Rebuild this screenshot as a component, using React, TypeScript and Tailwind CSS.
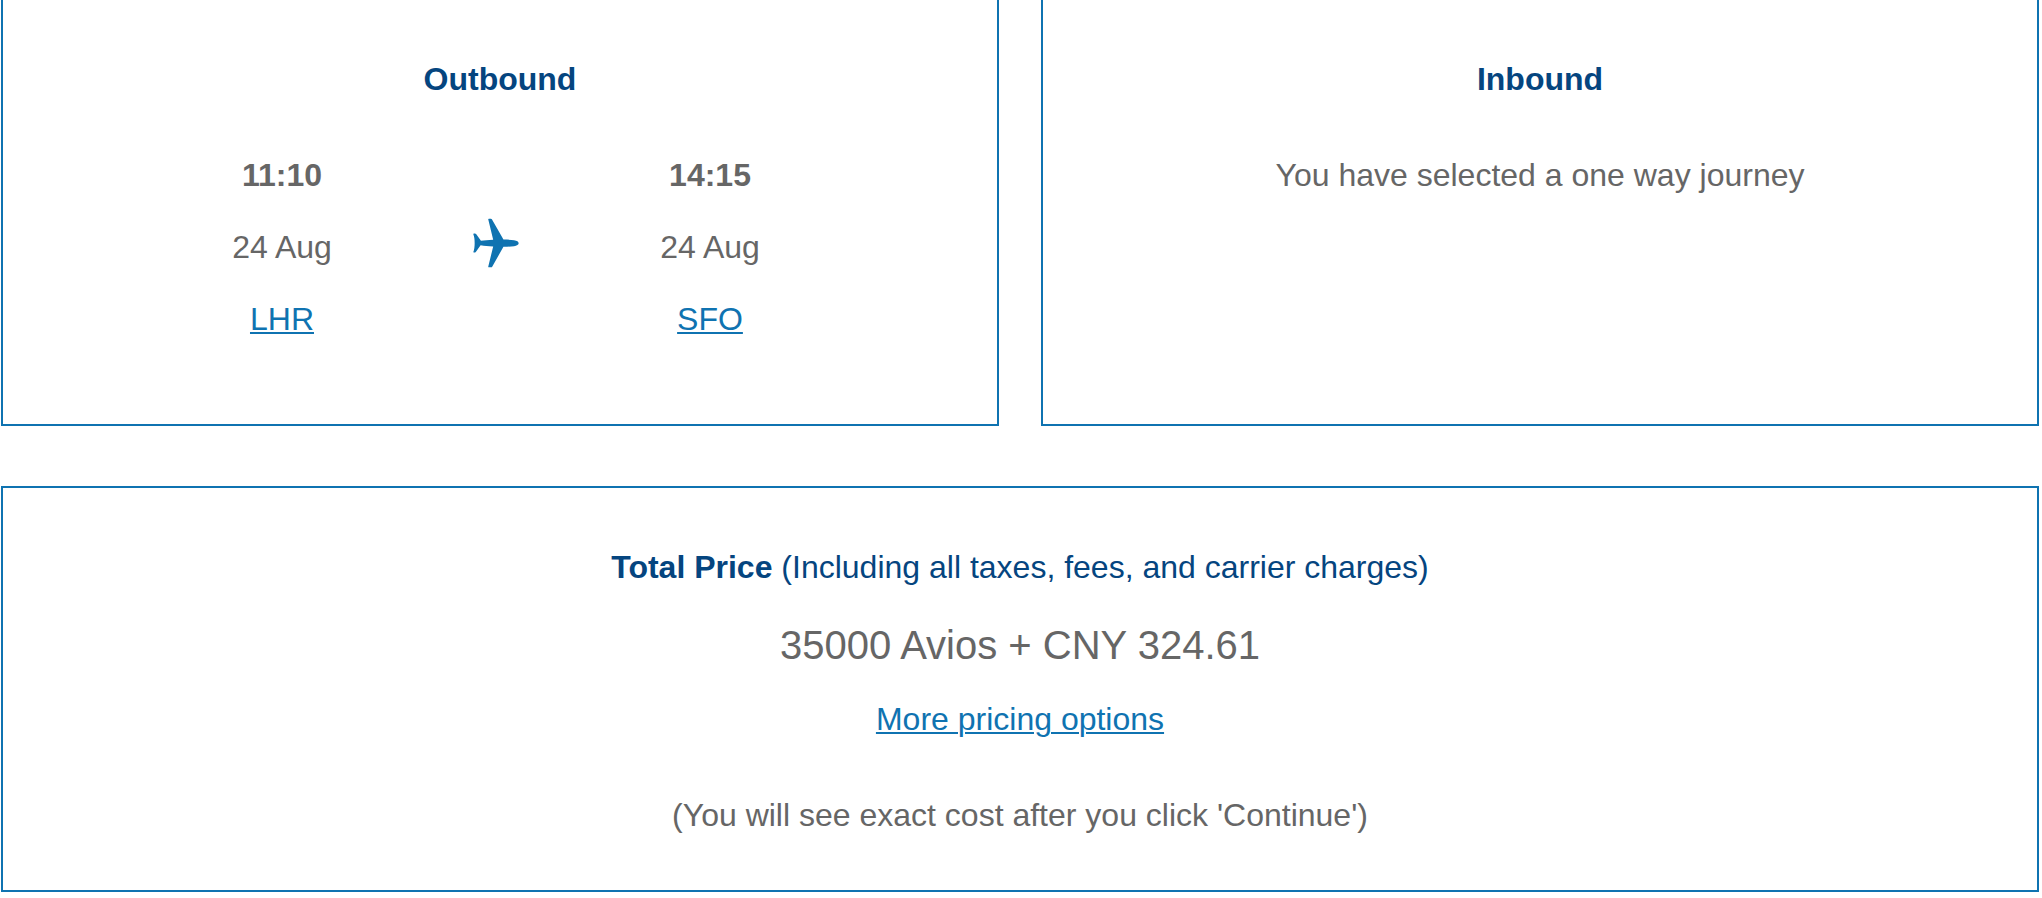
import type { ReactNode } from "react";
import clsx from "clsx";

interface Stop {
  time: string;
  date: string;
  airport: string;
}

const departure: Stop = { time: "11:10", date: "24 Aug", airport: "LHR" };
const arrival: Stop = { time: "14:15", date: "24 Aug", airport: "SFO" };

const linkClass =
  "text-[#0f73b1] underline decoration-2 underline-offset-2 hover:no-underline";

function Panel({
  className,
  children,
}: {
  className?: string;
  children: ReactNode;
}) {
  return (
    <section className={clsx("border-2 border-[#0f73b1] text-center", className)}>
      {children}
    </section>
  );
}

function PanelTitle({ children }: { children: ReactNode }) {
  return <h2 className="font-bold text-[#05457f]">{children}</h2>;
}

function PlaneIcon() {
  return (
    <svg
      viewBox="64 53 139 149"
      className="h-[50px] w-[46px] fill-[#0f73b1]"
      aria-hidden="true"
    >
      <path d="M110 56Q110 54 112 54H118Q120 54 121 56L156 117C170 117 180 118 188 119C197 120 202 124 202 128C202 132 197 135 188 137C180 138 170 139 156 139L122 199Q121 201 119 201H112Q110 201 110 199L125 138C110 137 98 136 87 134L73 154Q72 156 70 156H66L65 155C68 148 69 137 69 128C69 118 68 108 65 101L66 99H70Q72 99 74 101L88 121C98 120 110 119 125 118Z" />
    </svg>
  );
}

function StopDetails({ stop }: { stop: Stop }) {
  return (
    <div className="flex flex-col items-center gap-6">
      <p className="font-bold">{stop.time}</p>
      <p>{stop.date}</p>
      <a href="#" className={linkClass}>
        {stop.airport}
      </a>
    </div>
  );
}

export default function App() {
  return (
    <main className="bg-white pr-[3px] pl-px font-['Liberation_Sans',Arial,sans-serif] text-[32px] leading-[48px] text-[#666]">
      <div className="grid grid-cols-2 gap-[42px]">
        <Panel className="border-t-0 pt-[55px] pb-[81px]">
          <PanelTitle>Outbound</PanelTitle>
          <div className="mt-12 grid grid-cols-3 pr-45 pl-43">
            <StopDetails stop={departure} />
            <div className="flex items-center justify-center pb-2">
              <PlaneIcon />
            </div>
            <StopDetails stop={arrival} />
          </div>
        </Panel>

        <Panel className="border-t-0 pt-[55px] pb-[81px]">
          <PanelTitle>Inbound</PanelTitle>
          <p className="mt-12">You have selected a one way journey</p>
        </Panel>
      </div>

      <Panel className="mt-15 pt-[55px] pb-[51px]">
        <h2 className="text-[#05457f]">
          <strong>Total Price</strong> (Including all taxes, fees, and carrier
          charges)
        </h2>
        <p className="mt-6 text-[40px] leading-[60px]">
          35000 Avios + CNY 324.61
        </p>
        <p className="mt-5">
          <a href="#" className={linkClass}>
            More pricing options
          </a>
        </p>
        <p className="mt-12">
          (You will see exact cost after you click 'Continue')
        </p>
      </Panel>
    </main>
  );
}
